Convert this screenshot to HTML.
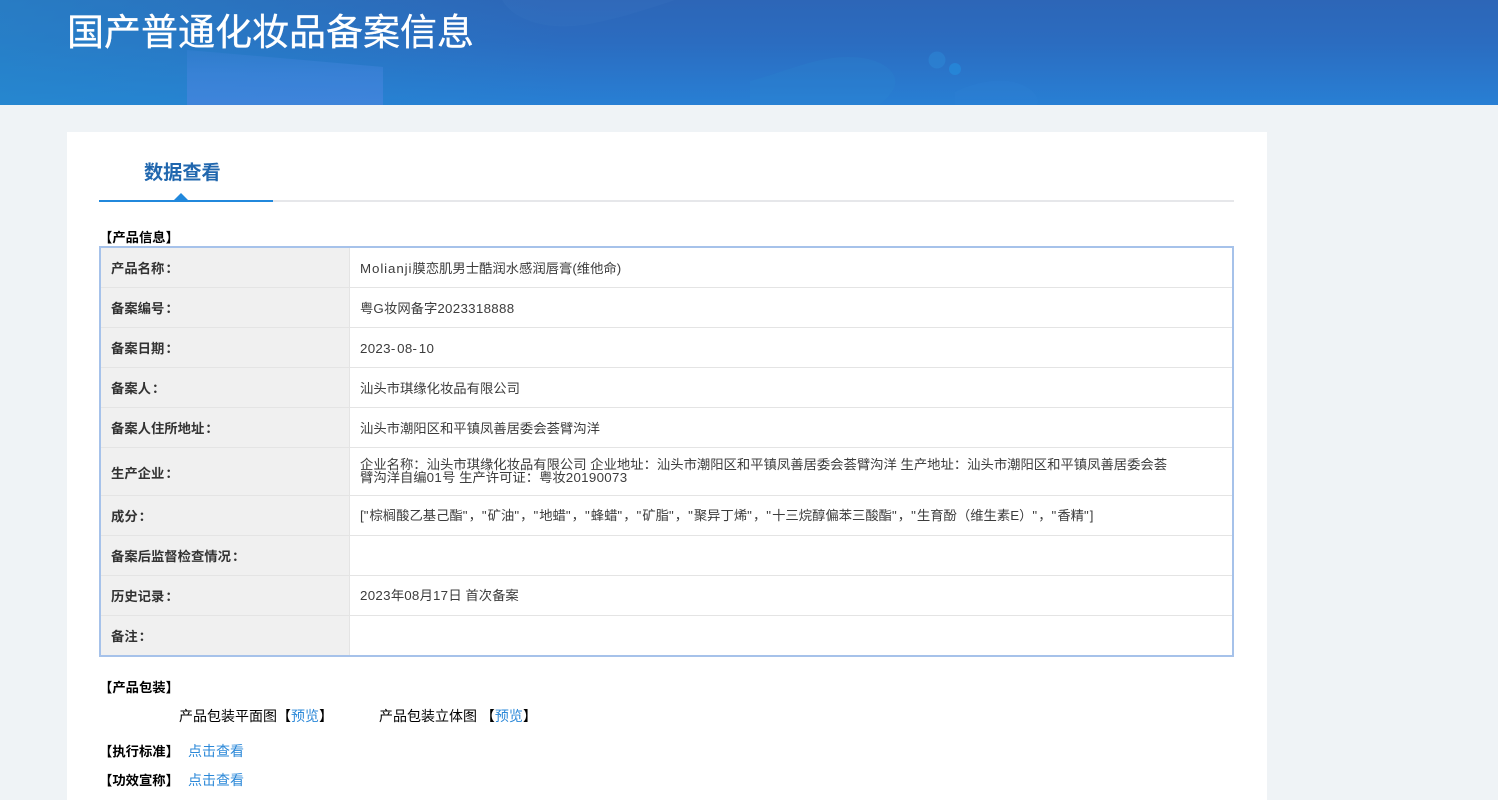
<!DOCTYPE html>
<html lang="zh-CN">
<head>
<meta charset="utf-8">
<title>国产普通化妆品备案信息</title>
<style>
html,body{margin:0;padding:0;width:1498px;height:800px;overflow:hidden;background:#eff3f6;}
body{position:relative;font-family:"Liberation Sans","Noto Sans CJK SC","WenQuanYi Zen Hei",sans-serif;font-size:13.33px;color:#000;}
.a{position:absolute;white-space:nowrap;}
#hdr{position:absolute;left:0;top:0;width:1498px;height:105px;overflow:hidden;background:linear-gradient(75deg,rgba(36,140,205,.6) 0%,rgba(36,140,205,0) 38%),linear-gradient(180deg,#2d66b7 0%,#2b6cc0 40%,#287fd4 100%);}
#hdr svg{position:absolute;left:0;top:0;}
#title{position:absolute;left:67px;top:7px;font-size:37px;line-height:52px;color:#fff;white-space:nowrap;-webkit-text-stroke:.3px #fff;}
#card{position:absolute;left:67px;top:132px;width:1200px;height:668px;background:#fff;}
#tabtxt{left:144px;top:160px;font-size:19.2px;line-height:28px;font-weight:700;color:#2167ae;}
#line{position:absolute;left:99px;top:200px;width:1135px;height:2px;background:#e6e7ea;}
#lineb{position:absolute;left:99px;top:200px;width:174px;height:2px;background:#2188dc;}
#tri{position:absolute;left:174px;top:193px;width:0;height:0;border-left:7px solid transparent;border-right:7px solid transparent;border-bottom:7px solid #2188dc;}
.h{left:99px;font-weight:700;line-height:18px;color:#000;}
#tbl{position:absolute;left:99px;top:246px;width:1131px;height:407px;border:2px solid #a6c2ea;background:#fff;}
#col{position:absolute;left:101px;top:248px;width:248px;height:407px;background:#f0f0f0;}
#sep{position:absolute;left:349px;top:248px;width:1px;height:407px;background:#e4e4e4;}
.r{position:absolute;left:101px;width:1131px;height:1px;background:#e4e4e4;}
.l{left:111px;font-weight:700;color:#333;line-height:18px;}
.l i{font-style:normal;margin-left:1px;}
.v{left:360px;color:#3c3c3c;line-height:18px;}
.n{letter-spacing:.3px;}
.m{letter-spacing:.9px;}
.d{letter-spacing:1.8px;}
.q{letter-spacing:1.05px;}
.p{font-size:14px;line-height:18px;color:#000;}
.lk{color:#2b88d8;}
</style>
</head>
<body>
<div id="hdr">
<svg width="1498" height="105" viewBox="0 0 1498 105">
<defs>
<linearGradient id="pg" x1="0" y1="0" x2="0" y2="1">
<stop offset="0" stop-color="#4384dc" stop-opacity=".25"/>
<stop offset=".45" stop-color="#4384dc" stop-opacity=".6"/>
<stop offset="1" stop-color="#4384dc" stop-opacity=".85"/>
</linearGradient>
</defs>
<polygon points="187,50 383,67 383,105 187,105" fill="url(#pg)"/>
<path d="M502 0C512 18 540 29 575 26C600 24 640 12 675 0Z" fill="#4a88d0" opacity=".1"/>
<path d="M750 81C785 72 815 57 848 57C885 57 902 75 893 90C888 98 882 103 878 105H750Z" fill="#2b8ad0" opacity=".2"/>
<path d="M955 105V92C970 84 1000 76 1020 84C1035 90 1040 98 1037 105Z" fill="#2f8ae0" opacity=".12"/>
<circle cx="937" cy="60" r="8.5" fill="#2b8ad8" opacity=".5"/>
<circle cx="955" cy="69" r="6" fill="#2590e0" opacity=".6"/>
</svg>
<div id="title">国产普通化妆品备案信息</div>
</div>

<div id="card"></div>
<div class="a" id="tabtxt">数据查看</div>
<div id="line"></div>
<div id="lineb"></div>
<div id="tri"></div>

<div class="a h" style="top:229px">【产品信息】</div>

<div id="tbl"></div>
<div id="col"></div>
<div id="sep"></div>
<div class="r" style="top:287px"></div>
<div class="r" style="top:327px"></div>
<div class="r" style="top:367px"></div>
<div class="r" style="top:407px"></div>
<div class="r" style="top:447px"></div>
<div class="r" style="top:495px"></div>
<div class="r" style="top:535px"></div>
<div class="r" style="top:575px"></div>
<div class="r" style="top:615px"></div>

<div class="a l" style="top:260px">产品名称<i>：</i></div>
<div class="a l" style="top:300px">备案编号<i>：</i></div>
<div class="a l" style="top:340px">备案日期<i>：</i></div>
<div class="a l" style="top:380px">备案人<i>：</i></div>
<div class="a l" style="top:420px">备案人住所地址<i>：</i></div>
<div class="a l" style="top:465px">生产企业<i>：</i></div>
<div class="a l" style="top:508px">成分<i>：</i></div>
<div class="a l" style="top:548px">备案后监督检查情况<i>：</i></div>
<div class="a l" style="top:588px">历史记录<i>：</i></div>
<div class="a l" style="top:628px">备注<i>：</i></div>

<div class="a v" style="top:260px"><span class="m">Molianji</span>膜恋肌男士酷润水感润唇膏(维他命)</div>
<div class="a v" style="top:300px">粤<span class="n">G</span>妆网备字<span class="n">2023318888</span></div>
<div class="a v" style="top:340px"><span class="n">2023</span><span class="d">-</span><span class="n">08</span><span class="d">-</span><span class="n">10</span></div>
<div class="a v" style="top:380px">汕头市琪缘化妆品有限公司</div>
<div class="a v" style="top:420px">汕头市潮阳区和平镇凤善居委会荟臂沟洋</div>
<div class="a v" style="top:458px;line-height:13px">企业名称：汕头市琪缘化妆品有限公司 企业地址：汕头市潮阳区和平镇凤善居委会荟臂沟洋 生产地址：汕头市潮阳区和平镇凤善居委会荟<br>臂沟洋自编<span class="n">01</span>号 生产许可证：粤妆<span class="n">20190073</span></div>
<div class="a v" style="top:507px">[<span class="q">"</span>棕榈酸乙基己酯<span class="q">"</span>，<span class="q">"</span>矿油<span class="q">"</span>，<span class="q">"</span>地蜡<span class="q">"</span>，<span class="q">"</span>蜂蜡<span class="q">"</span>，<span class="q">"</span>矿脂<span class="q">"</span>，<span class="q">"</span>聚异丁烯<span class="q">"</span>，<span class="q">"</span>十三烷醇偏苯三酸酯<span class="q">"</span>，<span class="q">"</span>生育酚（维生素E）<span class="q">"</span>，<span class="q">"</span>香精<span class="q">"</span>]</div>
<div class="a v" style="top:587px"><span class="n">2023</span>年<span class="n">08</span>月<span class="n">17</span>日 首次备案</div>

<div class="a h" style="top:679px">【产品包装】</div>
<div class="a p" style="left:179px;top:707px">产品包装平面图【<span class="lk">预览</span>】</div>
<div class="a p" style="left:379px;top:707px">产品包装立体图 【<span class="lk">预览</span>】</div>
<div class="a h" style="top:743px">【执行标准】</div>
<div class="a p lk" style="left:188px;top:742px">点击查看</div>
<div class="a h" style="top:772px">【功效宣称】</div>
<div class="a p lk" style="left:188px;top:771px">点击查看</div>
</body>
</html>
